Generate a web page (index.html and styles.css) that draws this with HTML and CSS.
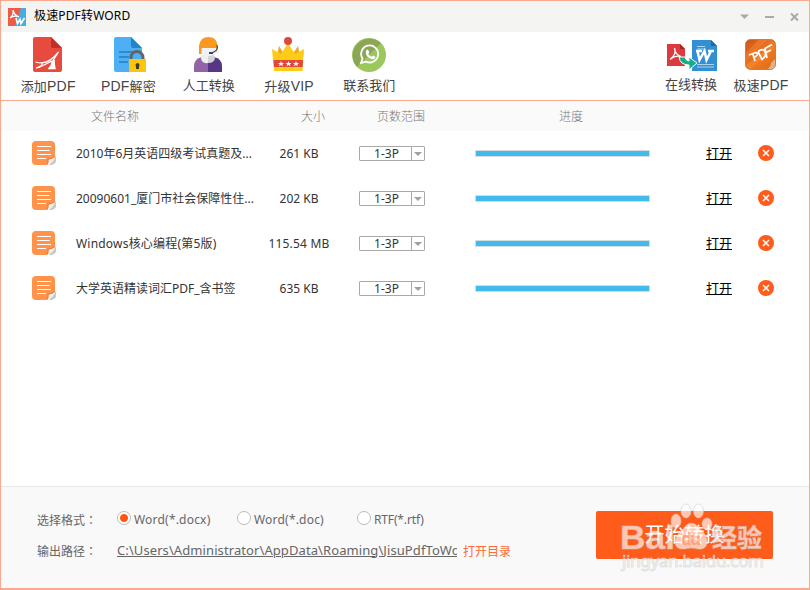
FILE: index.html
```
<!DOCTYPE html>
<html lang="zh-CN">
   <head>
      <meta charset="utf-8">
      <title>极速PDF转WORD</title>
      <link rel="stylesheet" href="styles.css">
   </head>
   <body>
      <svg class="defs" width="0" height="0">
         <symbol id="doc" viewBox="0 0 25 25">
            <path d="M17 24L24 15V21Q23 23 20 24Z" fill="#c9c9c9"/>
            <path d="M4 0H19Q23 0 23 4V16L15 24H4Q0 24 0 20V4Q0 0 4 0Z" fill="#fe934c"/>
            <path d="M15 24Q17 22 16.500 18.500Q20 18 23 16Q22 21 15 24Z" fill="#f4f1ef"/>
            <path d="M15 23.500Q16.500 21 16 18Q20 18 23 15.500" fill="none" stroke="#e9712d" stroke-width=".8"/>
            <path d="M5 5.500H19M5 9.500H17.500M5 13.500H19M5 17.500H14" stroke="#fff" stroke-width="1"/>
         </symbol>
         <symbol id="remove" viewBox="0 0 16 16">
            <circle cx="8" cy="8" r="8" fill="#ff5b1c"/>
            <path d="M5 5L11 11M11 5L5 11" stroke="#fff" stroke-width="1.500"/>
         </symbol>
      </svg>
      <div class="window">
         <div class="titlebar">
            <svg width="18" height="18" viewBox="0 0 18 18">
               <path d="M0 0H14L8 18H0Z" fill="#ed5b45"/>
               <path d="M13 0H18V18H7Z" fill="#42aee2"/>
               <path d="M2 10Q6 7 5 2Q6 7 11 9Q6 7 2 10" fill="none" stroke="#fff" stroke-width="1.300"/>
               <path d="M8 10L9.500 15.500L12 11.500L13 15.500L16.500 10" fill="none" stroke="#fff" stroke-width="1.700"/>
            </svg>
            <span class="title">极速PDF转WORD</span>
            <div class="controls">
               <svg width="60" height="12" viewBox="0 0 60 12">
                  <path d="M0 3.500H9L4.500 8Z" fill="#a9a9a9"/>
                  <path d="M25 6H34" stroke="#a9a9a9" stroke-width="2"/>
                  <path d="M51 2.500L58 9.500M58 2.500L51 9.500" stroke="#a9a9a9" stroke-width="2"/>
               </svg>
            </div>
         </div>
         <div class="toolbar">
            <div class="tool">
               <svg width="36" height="36" viewBox="0 0 36 36">
                  <path d="M5 0H21L32 11V33Q32 35 30 35H5Q3 35 3 33V2Q3 0 5 0Z" fill="#e74b3e"/>
                  <path d="M21 0L32 11H23Q21 11 21 9Z" fill="#bd3129"/>
                  <path d="M5.500 25Q18 29 28.500 15Q26 19 24 22Q24 27 25 31.500H19Q22 28 22.500 23.500M6 31Q11 30 12.500 26.500M9 30.500Q16 27 22 24" fill="none" stroke="#fff" stroke-width="1.300"/>
                  <path d="M22 24L24 22L25 31.500H19Q22 28 22 24Z" fill="#fff"/>
               </svg>
               <span class="wide">添加<b>PDF</b></span>
            </div>
            <div class="tool">
               <svg width="36" height="36" viewBox="0 0 36 36">
                  <path d="M6 0H21L32 11V33Q32 35 30 35H6Q4 35 4 33V2Q4 0 6 0Z" fill="#4faff5"/>
                  <path d="M21 0L32 11H23Q21 11 21 9Z" fill="#2383c9"/>
                  <path d="M9 15H23M9 20H19M9 25H18" stroke="#2280bf" stroke-width="1.500"/>
                  <path d="M21 23V20.500A6 6 0 0 1 33 20.500V23" fill="none" stroke="#626466" stroke-width="3"/>
                  <path d="M19 22H36V35H19Z" fill="#fdc50b"/>
                  <path d="M26 29.500A2 2 0 1 1 29 29.500V32H26Z" fill="#493b21"/>
               </svg>
               <span class="wide"><b>PDF</b>解密</span>
            </div>
            <div class="tool">
               <svg width="36" height="36" viewBox="0 0 36 36">
                  <path d="M3 35V29Q3 22 11 20H17V35Z" fill="#9164a5"/>
                  <path d="M17 20H23Q31 22 31 29V35H17Z" fill="#573684"/>
                  <path d="M12 17H17V26Q10 27 10 20Z" fill="#eeeeee"/>
                  <path d="M17 17H22L24 20Q24 26 17 26Z" fill="#d2d3d6"/>
                  <path d="M9 9H26V13Q24 19 17 19Q10 19 9 13Z" fill="#f1f1f1"/>
                  <path d="M8 17V9Q9 0 17.500 0Q26 0 26.500 9L26 17L25 11H10.500V17Z" fill="#f9991f"/>
                  <path d="M26 8Q28 14 20 16" fill="none" stroke="#314968" stroke-width="1.200"/>
                  <path d="M18 15H22V17H18Z" fill="#314968"/>
               </svg>
               <span>人工转换</span>
            </div>
            <div class="tool">
               <svg width="36" height="36" viewBox="0 0 36 36">
                  <path d="M8 9L14 18L5 23ZM27 9L21 18L30 23Z" fill="#efa929"/>
                  <path d="M1 12L10 17L17 6L24 17L33 12L31.500 34H3Z" fill="#fecb16"/>
                  <path d="M2.500 23H32L31.700 30H3Z" fill="#df493a"/>
                  <circle cx="17" cy="4" r="4" fill="#df493a"/>
                  <path id="star" d="M10 24L10.800 26H13L11.300 27.300L12 29.300L10 28L8 29.300L8.700 27.300L7 26H9.200Z" fill="#fff"/>
                  <use href="#star" x="7.500"/>
                  <use href="#star" x="15"/>
               </svg>
               <span class="wide">升级<b>VIP</b></span>
            </div>
            <div class="tool">
               <svg width="36" height="36" viewBox="0 0 36 36">
                  <circle cx="18" cy="18" r="17" fill="#9bc75d"/>
                  <path d="M6 30A17 17 0 0 1 30 6Z" fill="#8ba657"/>
                  <path d="M10 26L11.500 21.500A8.500 8.500 0 1 1 15 24.600Z" fill="none" stroke="#fff" stroke-width="1.800"/>
                  <path d="M15.500 13L17 12.500L18.300 15.500L17.300 17Q18.500 19 20.700 19.700L22 18.500L24.500 20Q24 22.500 21.500 22.300Q15 20.500 14.800 15.500Q14.700 14 15.500 13Z" fill="#fff"/>
               </svg>
               <span>联系我们</span>
            </div>
            <div class="tool tool-right">
               <svg width="52" height="36" viewBox="0 0 52 36">
                  <path d="M2 8H15L20 13V30H2Z" fill="#dc3a3c"/>
                  <path d="M15 8L20 13H15Z" fill="#aa2528"/>
                  <path d="M5 23.500Q12 18 9.500 12Q10 18.500 16 20.500Q10 19 5 23.500" fill="none" stroke="#fff" stroke-width="1.300"/>
                  <path d="M27 4H46L52 10V35H27Z" fill="#338fd3"/>
                  <path d="M46 4L52 10H46Z" fill="#1e699f"/>
                  <path d="M32 10.500H40M32 13H40M32 28.500H49M32 31H49" stroke="#a9d5f3" stroke-width="1"/>
                  <path d="M31 15H37M32.500 15L34.500 24L39.500 15L41.500 24L46 15M43 15H49" fill="none" stroke="#fff" stroke-width="2.500"/>
                  <path d="M14 21Q15 29 24 29V34L32 27L24 21V25Q21 25 20 21Z" fill="#15ae85" stroke="#fff" stroke-width="1"/>
               </svg>
               <span>在线转换</span>
            </div>
            <div class="tool tool-small">
               <svg width="36" height="36" viewBox="0 0 36 36">
                  <defs>
                     <linearGradient id="orange" x1="0" y1="0" x2="1" y2="1">
                        <stop offset="0" stop-color="#cd5218"/>
                        <stop offset=".55" stop-color="#f17a20"/>
                        <stop offset="1" stop-color="#d96916"/>
                     </linearGradient>
                  </defs>
                  <rect x="2.500" y="3.500" width="30" height="30" rx="5" fill="url(#orange)" stroke="#be805a"/>
                  <path d="M3 17L15 4H24L3 25ZM3 29L31 9V13L7 33Z" fill="#ff9a4a" opacity=".3"/>
                  <path d="M24 33Q28 31 28 27L32 23V29Q32 33 28 33Z" fill="#ddb18b"/>
                  <path d="M6 19L13 16.500Q17 18.500 10 22M10 18.500L12 25M15 15.500L19 23.500Q25 19 21 14.500Q19 12.500 15 15.500M24 22L22 12.500L29 8.500M23 16.500L28 14" fill="none" stroke="#fff" stroke-width="1.700"/>
               </svg>
               <span class="wide">极速<b>PDF</b></span>
            </div>
         </div>
         <div class="head">
            <span>文件名称</span>
            <span>大小</span>
            <span>页数范围</span>
            <span>进度</span>
         </div>
         <div class="list">
            <div class="row">
               <svg width="25" height="25"><use href="#doc"/></svg>
               <span class="name">2010年6月英语四级考试真题及...</span>
               <span class="size">261 KB</span>
               <div class="range"><span>1-3P</span><i></i></div>
               <div class="bar"></div>
               <a class="open">打开</a>
               <svg class="remove" width="16" height="16"><use href="#remove"/></svg>
            </div>
            <div class="row">
               <svg width="25" height="25"><use href="#doc"/></svg>
               <span class="name">20090601_厦门市社会保障性住...</span>
               <span class="size">202 KB</span>
               <div class="range"><span>1-3P</span><i></i></div>
               <div class="bar"></div>
               <a class="open">打开</a>
               <svg class="remove" width="16" height="16"><use href="#remove"/></svg>
            </div>
            <div class="row">
               <svg width="25" height="25"><use href="#doc"/></svg>
               <span class="name long">Windows核心编程(第5版)</span>
               <span class="size long">115.54 MB</span>
               <div class="range"><span>1-3P</span><i></i></div>
               <div class="bar"></div>
               <a class="open">打开</a>
               <svg class="remove" width="16" height="16"><use href="#remove"/></svg>
            </div>
            <div class="row">
               <svg width="25" height="25"><use href="#doc"/></svg>
               <span class="name">大学英语精读词汇PDF_含书签</span>
               <span class="size">635 KB</span>
               <div class="range"><span>1-3P</span><i></i></div>
               <div class="bar"></div>
               <a class="open">打开</a>
               <svg class="remove" width="16" height="16"><use href="#remove"/></svg>
            </div>
         </div>
         <div class="footer">
            <div class="options">
               <div class="line">
                  <span class="label">选择格式<span class="colon" lang="zh-TW">：</span></span>
                  <label class="format"><i class="radio checked"></i>Word(*.docx)</label>
                  <label class="format"><i class="radio"></i>Word(*.doc)</label>
                  <label class="format rtf"><i class="radio"></i>RTF(*.rtf)</label>
               </div>
               <div class="line">
                  <span class="label">输出路径<span class="colon" lang="zh-TW">：</span></span>
                  <span class="path">C:\Users\Administrator\AppData\Roaming\JisuPdfToWo</span>
                  <a class="folder">打开目录</a>
               </div>
            </div>
            <div class="start">
               <span>开始转换</span>
               <svg class="watermark" width="160" height="78" viewBox="0 0 160 78">
                  <g fill="#fff" fill-opacity=".66" stroke="#c8c8c8" stroke-opacity=".5">
                     <ellipse cx="70" cy="14" rx="5" ry="7"/>
                     <ellipse cx="82.500" cy="14" rx="5" ry="7"/>
                     <ellipse cx="60" cy="24" rx="5" ry="7"/>
                     <ellipse cx="91" cy="27" rx="5" ry="6"/>
                     <path d="M75 26Q80 26 84 32Q92 39 91 46Q90 53 82 52Q75 50 69 52Q59 53 59 45Q59 39 67 32Q71 26 75 26Z"/>
                     <text class="wm-big" x="4" y="52" textLength="55" lengthAdjust="spacingAndGlyphs">Bai</text>
                     <text class="wm-cn" x="96" y="50" textLength="50">经验</text>
                     <text class="wm-url" x="6" y="70" textLength="142">jingyan.baidu.com</text>
                  </g>
                  <text class="wm-du" x="65" y="48" textLength="20">du</text>
               </svg>
            </div>
         </div>
      </div>
   </body>
</html>
```
FILE: styles.css
```
body{
margin: 0;
font-family: "Noto Sans", "Noto Sans CJK SC", sans-serif;
font-size: 12px;
color: #333;
}
.defs{
position: absolute;
}
.window{
box-sizing: border-box;
width: 810px;
height: 590px;
border: 1px solid #faa98e;
border-bottom-width: 2px;
background-color: #fff;
display: flex;
flex-direction: column;
overflow: hidden;
}
.titlebar{
height: 31px;
padding: 0 9px 0 7px;
background-color: #f4f4f2;
display: flex;
align-items: center;
}
.title{
margin-left: 8px;
color: #000;
letter-spacing: 0.15px;
line-height: 29px;
align-self: flex-start;
}
.controls{
margin-left: auto;
display: flex;
}
.toolbar{
height: 68px;
padding-left: 7px;
border-bottom: 1px solid #faa98e;
display: flex;
}
.tool{
width: 80.300px;
padding-top: 5px;
display: flex;
flex-direction: column;
align-items: center;
font-family: "Liberation Sans", "Noto Sans CJK SC", sans-serif;
font-size: 13px;
line-height: 20px;
color: #444;
white-space: nowrap;
}
.tool span{
margin-top: 3px;
}
.tool b{
font-size: 14px;
font-weight: normal;
}
.tool .wide{
letter-spacing: 0.2px;
}
.tool-right{
width: 70px;
margin-left: auto;
}
.tool-small{
width: 70px;
margin-right: 13px;
}
.tool-right svg, .tool-small svg{
margin-top: -1px;
}
.head{
height: 30px;
padding-left: 90px;
background-color: #fafafa;
color: #777;
line-height: 29px;
display: grid;
grid-template-columns: 210px 76px 182px 1fr;
font-family: "Noto Sans CJK SC", sans-serif;
font-weight: 300;
}
.list{
flex: 1;
}
.row{
height: 45px;
padding-left: 31px;
display: grid;
grid-template-columns: 44px 180px 86px 100px 240px 74px 20px;
align-items: center;
}
.name{
padding-bottom: 2px;
white-space: nowrap;
}
.size{
text-align: center;
}
.long{
letter-spacing: 0.2px;
}
.range{
box-sizing: border-box;
width: 66px;
height: 15px;
margin-left: 17px;
border: 1px solid #a9a9a9;
border-radius: 1px;
display: flex;
line-height: 13px;
}
.range span{
flex: 1;
text-align: center;
padding-left: 2px;
}
.range i{
width: 12px;
border-left: 1px solid #a9a9a9;
display: flex;
align-items: center;
justify-content: center;
}
.range i::after{
content: "";
border: 4px solid transparent;
border-top-color: #a0a0a0;
border-bottom: 0;
}
.bar{
box-sizing: border-box;
width: 175px;
height: 7px;
margin-left: 33px;
border: 1px solid #d3dce0;
border-radius: 1px;
background-color: #43bbea;
}
.open{
padding-bottom: 2px;
color: #000;
font-size: 13px;
text-align: center;
text-decoration: underline;
}
.remove{
margin: 0 0 1px 2px;
}
.footer{
box-sizing: border-box;
height: 102px;
padding: 17px 36px 0 36px;
border-top: 1px solid #e8e8e8;
background-color: #f9f9f9;
color: #666;
display: flex;
justify-content: space-between;
}
.line{
height: 31px;
display: flex;
align-items: center;
}
.label{
width: 80px;
}
.colon{
font-family: "Noto Sans CJK TC", sans-serif;
}
.format{
width: 120px;
display: flex;
align-items: center;
letter-spacing: 0.2px;
}
.rtf{
letter-spacing: -0.15px;
}
.radio{
box-sizing: border-box;
width: 14px;
height: 14px;
margin: -3px 3px 0 0;
border: 1px solid #bbb;
border-radius: 50%;
background-color: #fff;
}
.checked{
background-image: radial-gradient(circle, #ff5712 3.500px, transparent 4.500px);
}
.path{
width: 340px;
padding-bottom: 2px;
overflow: hidden;
white-space: nowrap;
text-decoration: underline;
font-size: 13px;
letter-spacing: 0.09px;
}
.folder{
margin-left: 6px;
color: #ff6a35;
}
.start{
position: relative;
width: 177px;
height: 48px;
margin-top: 7px;
border-radius: 2px;
background-color: #ff5b1b;
color: #fff;
font-size: 20px;
line-height: 48px;
text-align: center;
}
.watermark{
position: absolute;
left: 20px;
top: -14px;
}
.wm-big{
font: bold 33px "Liberation Sans", sans-serif;
}
.wm-cn{
font: bold 25px "Noto Sans CJK SC", sans-serif;
}
.wm-url{
font: 17px "Noto Sans", sans-serif;
}
.wm-du{
font: bold 18px "Liberation Sans", sans-serif;
fill: #ff7946;
fill-opacity: .5;
}
```
